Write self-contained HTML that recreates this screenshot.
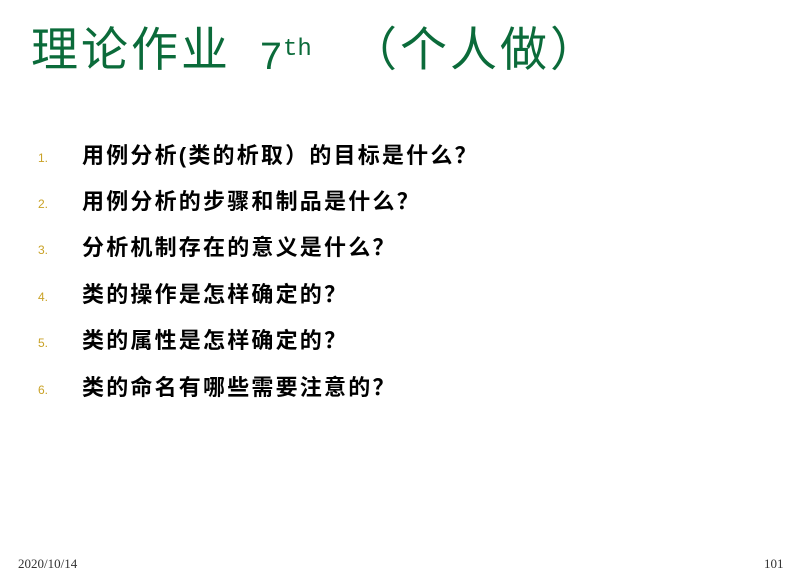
<!DOCTYPE html>
<html><head><meta charset="utf-8"><style>
body{margin:0;width:800px;height:581px;background:#fff;position:relative;overflow:hidden;font-family:"Liberation Sans","Noto Sans CJK SC",sans-serif;}
.t{position:absolute;top:20px;color:#0b6b3a;font-size:47px;white-space:nowrap;letter-spacing:3px;line-height:60px;}
.m{position:absolute;top:25px;color:#0b6b3a;font-family:"Liberation Mono",monospace;font-size:40px;line-height:50px;white-space:nowrap;}
.m sup{font-size:24px;vertical-align:14px;}
.row{position:absolute;left:0;height:30px;white-space:nowrap;}
.num{position:absolute;left:38px;top:10px;color:#c9a227;font-size:12px;}
.tx{position:absolute;left:82px;top:0;font-size:22px;font-weight:bold;color:#000;line-height:30px;letter-spacing:2.2px;}
.f{position:absolute;top:556px;font-family:"Liberation Serif","Noto Serif CJK SC",serif;font-size:13px;color:#333;}
</style></head><body>
<div class="t" style="left:31px">理论作业</div>
<div class="m" style="left:259px">7<sup>th</sup></div>
<div class="t" style="left:350px">（个人做）</div>
<div class="row" style="top:141px"><span class="num">1.</span><span class="tx">用例分析(类的析取）的目标是什么？</span></div>
<div class="row" style="top:187px"><span class="num">2.</span><span class="tx">用例分析的步骤和制品是什么？</span></div>
<div class="row" style="top:233px"><span class="num">3.</span><span class="tx">分析机制存在的意义是什么？</span></div>
<div class="row" style="top:280px"><span class="num">4.</span><span class="tx">类的操作是怎样确定的？</span></div>
<div class="row" style="top:326px"><span class="num">5.</span><span class="tx">类的属性是怎样确定的？</span></div>
<div class="row" style="top:373px"><span class="num">6.</span><span class="tx">类的命名有哪些需要注意的？</span></div>
<div class="f" style="left:18px">2020/10/14</div>
<div class="f" style="left:764px">101</div>
</body></html>
